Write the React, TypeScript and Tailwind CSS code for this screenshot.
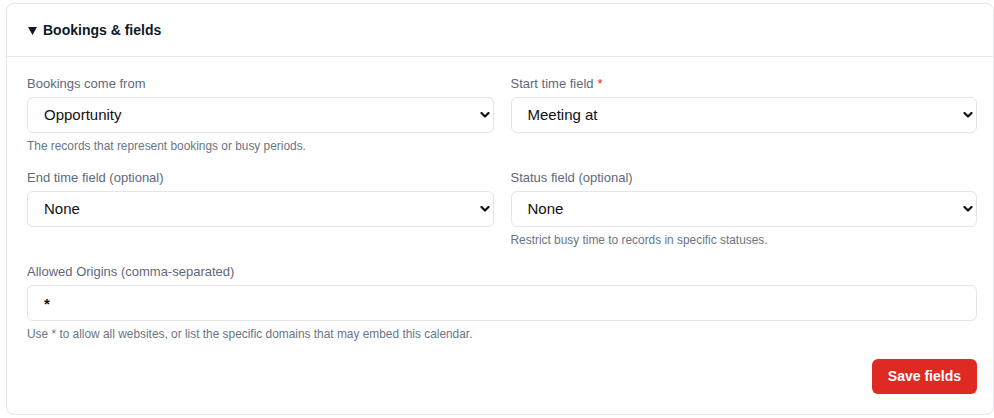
import React from "react";

const font = { fontFamily: '"Liberation Sans", Arial, sans-serif' };

function Chevron() {
  return (
    <svg
      width="10"
      height="7"
      viewBox="0 0 10 7"
      className="pointer-events-none absolute right-[4px] top-1/2 -translate-y-1/2"
    >
      <path d="M1.5 1.5 L5 5 L8.5 1.5" fill="none" stroke="#111" strokeWidth="2.2" strokeLinecap="round" strokeLinejoin="round" />
    </svg>
  );
}

function SelectBox({ value, options }: { value: string; options: string[] }) {
  return (
    <div className="relative">
      <select
        defaultValue={value}
        className="h-[36px] w-full appearance-none rounded-[6px] border border-[#e3e5ea] bg-white pl-[16px] pr-8 pt-[1px] text-[15px] text-[#111] outline-none"
        style={font}
      >
        {options.map((o) => (
          <option key={o}>{o}</option>
        ))}
      </select>
      <Chevron />
    </div>
  );
}

function Label({ children, required }: { children: React.ReactNode; required?: boolean }) {
  return (
    <label className="mb-[3px] block text-[13px] leading-5 text-[#5f687a]">
      {children}
      {required && <span className="ml-[4px] text-[#e0261f]">*</span>}
    </label>
  );
}

function Help({ children }: { children: React.ReactNode }) {
  return <p className="mt-[5px] text-[11.9px] leading-4 text-[#6b7586]">{children}</p>;
}

export default function App() {
  return (
    <div className="min-h-screen bg-white pl-[6px] pt-[3px]" style={font}>
      <div className="w-[988px] rounded-[8px] border border-[#e6e7eb] bg-white">
        <div className="flex h-[53px] items-center gap-[6px] border-b border-[#e6e7eb] pl-[21px]">
          <svg width="9" height="8" viewBox="0 0 9 8" className="mt-[1px]">
            <path d="M0 0 H9 L4.5 8 Z" fill="#111827" />
          </svg>
          <h2 className="text-[14px] font-bold text-[#111827]">Bookings &amp; fields</h2>
        </div>

        <div className="pb-[20px] pl-[20px] pr-[16px] pt-[17px]">
          <div className="grid grid-cols-2 gap-x-[17px] gap-y-[14px]">
            <div>
              <Label>Bookings come from</Label>
              <SelectBox value="Opportunity" options={["Opportunity", "Lead", "Contact"]} />
              <Help>The records that represent bookings or busy periods.</Help>
            </div>
            <div>
              <Label required>Start time field</Label>
              <SelectBox value="Meeting at" options={["Meeting at", "Created at"]} />
            </div>
            <div>
              <Label>End time field (optional)</Label>
              <SelectBox value="None" options={["None", "Meeting ends at"]} />
            </div>
            <div>
              <Label>Status field (optional)</Label>
              <SelectBox value="None" options={["None", "Stage"]} />
              <Help>Restrict busy time to records in specific statuses.</Help>
            </div>
            <div className="col-span-2">
              <Label>Allowed Origins (comma-separated)</Label>
              <input
                defaultValue="*"
                className="h-[36px] w-full rounded-[6px] border border-[#e3e5ea] bg-white pl-[16px] text-[15px] font-bold text-[#111] outline-none"
                style={font}
              />
              <Help>Use * to allow all websites, or list the specific domains that may embed this calendar.</Help>
            </div>
          </div>

          <div className="mt-[17px] flex justify-end">
            <button className="h-[35px] rounded-[6px] bg-[#df2a24] px-[16px] text-[14px] font-bold text-white">
              Save fields
            </button>
          </div>
        </div>
      </div>
    </div>
  );
}
